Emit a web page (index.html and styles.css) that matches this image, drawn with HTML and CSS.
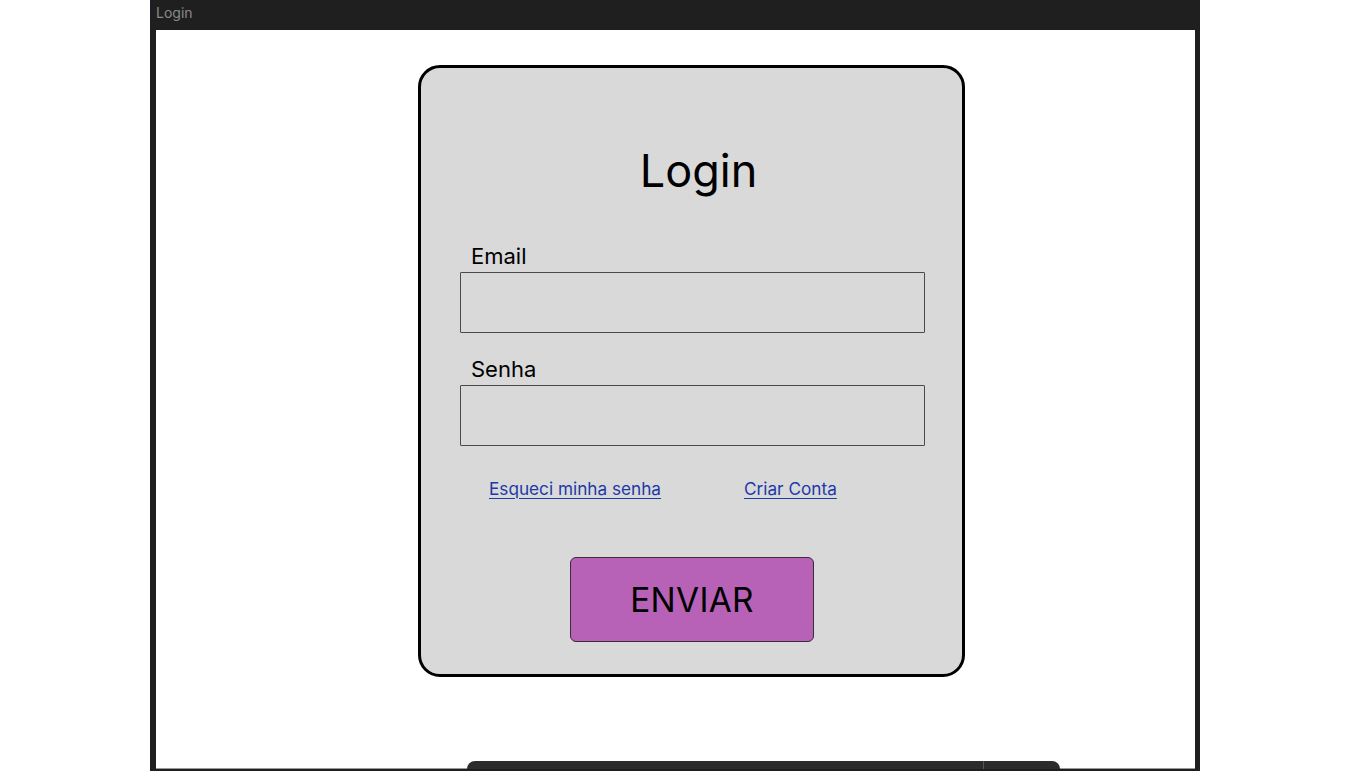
FILE: index.html
```html
<!DOCTYPE html>
<html lang="pt">
<head>
<meta charset="utf-8">
<title>Login</title>
<link rel="stylesheet" href="styles.css">
</head>
<body>
<div class="frame">
  <div class="titlebar">Login</div>
  <div class="viewport">
    <div class="card">
      <h1 class="title">Login</h1>
      <label class="label" for="email">Email</label>
      <input class="field" id="email" type="text">
      <label class="label label-2" for="senha">Senha</label>
      <input class="field" id="senha" type="password">
      <div class="links">
        <a class="link" href="#">Esqueci minha senha</a>
        <a class="link link-2" href="#">Criar Conta</a>
      </div>
      <button class="btn" type="button">ENVIAR</button>
    </div>
    <div class="dock"><div class="dock-sep"></div></div>
  </div>
</div>
</body>
</html>
```
FILE: styles.css
```css
html, body {
  margin: 0;
  padding: 0;
  background: #ffffff;
  height: 771px;
  overflow: hidden;
}
body {
  font-family: Inter, "Noto Sans", sans-serif;
}
.frame {
  margin-left: 150px;
  width: 1050px;
  height: 771px;
  background: #1f1f1f;
  box-sizing: border-box;
  padding: 0 5px 2px 6px;
  display: flex;
  flex-direction: column;
}
.titlebar {
  height: 30px;
  line-height: 25px;
  font-size: 14px;
  color: #8a8a8a;
  flex: none;
}
.viewport {
  flex: 1;
  background: #ffffff;
  position: relative;
  border-bottom: 1px solid #9a9a9a;
}
.card {
  margin: 35px 0 0 262px;
  width: 547px;
  height: 612px;
  box-sizing: border-box;
  border: 3px solid #000;
  border-radius: 22px;
  background: #d9d9d9;
  padding: 0 37px 0 39px;
  display: flex;
  flex-direction: column;
}
.title {
  margin: 75px 0 0 0;
  font-weight: 400;
  font-size: 45px;
  line-height: 56px;
  text-align: center;
  padding-left: 12px;
  color: #000;
}
.label {
  margin: 43px 0 2px 0;
  padding-left: 11px;
  font-size: 22px;
  line-height: 28px;
  color: #000;
}
.label-2 {
  margin-top: 22px;
}
.field {
  display: block;
  width: 465px;
  height: 61px;
  box-sizing: border-box;
  margin: 0;
  border: 1px solid #4a4a4a;
  border-radius: 1px;
  background: #d9d9d9;
  outline: none;
}
.links {
  display: flex;
  margin-top: 32px;
  padding-left: 29px;
  height: 22px;
}
.link {
  font-size: 17.2px;
  line-height: 22px;
  color: #1d3aa8;
  text-decoration: underline;
  text-underline-offset: 3px;
  text-decoration-thickness: 1px;
}
.link-2 {
  margin-left: 83px;
}
.btn {
  align-self: flex-start;
  margin: 57px 0 0 110px;
  width: 244px;
  height: 85px;
  box-sizing: border-box;
  border: 1px solid #3a2a3a;
  border-radius: 6px;
  background: #b762b7;
  font-family: Inter, "Noto Sans", sans-serif;
  font-size: 33.4px;
  color: #000;
  padding: 0;
  letter-spacing: 0.3px;
}
.dock {
  position: absolute;
  left: 311px;
  bottom: -1px;
  width: 593px;
  height: 8px;
  background: #2c2c2c;
  border-radius: 10px 10px 0 0;
}
.dock-sep {
  position: absolute;
  left: 516px;
  top: 0;
  bottom: 0;
  width: 1px;
  background: #555;
}
```
